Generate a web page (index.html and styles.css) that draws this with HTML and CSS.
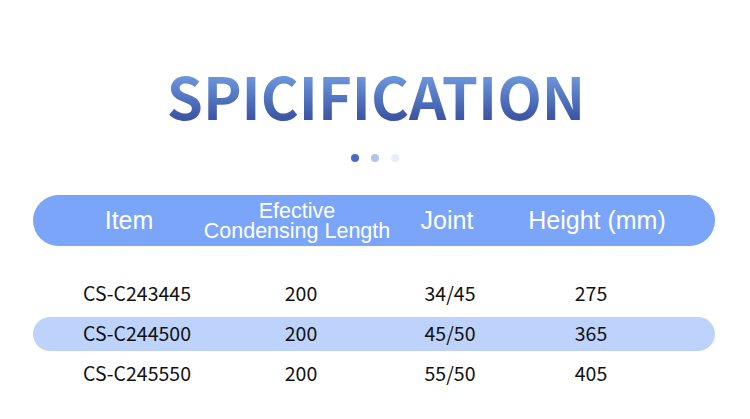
FILE: index.html
```html
<!DOCTYPE html>
<html>
<head>
<meta charset="utf-8">
<link rel="stylesheet" href="styles.css">
</head>
<body>
<div class="page">
  <h1 class="title">SPICIFICATION</h1>
  <div class="dots"><span class="dot d1"></span><span class="dot d2"></span><span class="dot d3"></span></div>
  <div class="table">
    <div class="head">
      <div class="hc c1">Item</div>
      <div class="hc c2"><span class="small">Efective<br>Condensing Length</span></div>
      <div class="hc c3">Joint</div>
      <div class="hc c4">Height (mm)</div>
    </div>
    <div class="row">
      <div class="c1">CS-C243445</div><div class="c2">200</div><div class="c3">34/45</div><div class="c4">275</div>
    </div>
    <div class="row alt">
      <div class="c1">CS-C244500</div><div class="c2">200</div><div class="c3">45/50</div><div class="c4">365</div>
    </div>
    <div class="row">
      <div class="c1">CS-C245550</div><div class="c2">200</div><div class="c3">55/50</div><div class="c4">405</div>
    </div>
  </div>
</div>
</body>
</html>
```
FILE: styles.css
```css
html, body { margin: 0; padding: 0; background: #fff; }
.page { width: 750px; height: 419px; overflow: hidden; padding-top: 66px; box-sizing: border-box; }
.title {
  margin: 0;
  font-family: "Noto Sans CJK SC", "Noto Sans", sans-serif;
  font-weight: 700;
  font-size: 58px;
  line-height: 1;
  letter-spacing: 0;
  text-align: center;
  padding-left: 2px;
  background: linear-gradient(to bottom, #6e99de 15%, #3c55a5 90%);
  -webkit-background-clip: text;
  background-clip: text;
  color: transparent;
}
.dots { display: flex; justify-content: center; gap: 12px; margin-top: 30px; }
.dot { width: 8px; height: 8px; border-radius: 50%; }
.d1 { background: #4a6cc4; }
.d2 { background: #b3c4e9; }
.d3 { background: #e9eef9; }
.table { margin: 33px 35px 0 33px; }
.head, .row {
  display: grid;
  grid-template-columns: 200px 130px 168px 132px 1fr;
  align-items: center;
  text-align: center;
}
.head {
  height: 51px;
  border-radius: 26px;
  background: #7aa5f9;
  color: #fff;
  font-family: "Liberation Sans", Arial, sans-serif;
  font-size: 25px;
  white-space: nowrap;
}
.head .hc { display: flex; justify-content: center; }
.head .small { flex: none; text-align: center; font-size: 21.5px; line-height: 20px; padding-top: 1px; }
.head .c1 { transform: translateX(-4px); }
.head .c2 { transform: translateX(-1px); }
.row {
  height: 34px;
  border-radius: 17px;
  margin-top: 6px;
  font-family: "Noto Sans CJK SC", "Noto Sans", sans-serif;
  font-size: 19.5px;
  line-height: 24px;
  color: #111;
  white-space: nowrap;
}
.row > div { padding-bottom: 2px; }
.head + .row { margin-top: 31px; }
.row.alt { background: #bdd3fb; }
.row .c1 { transform: translateX(4px); }
.row .c2 { transform: translateX(3px); }
.row .c3 { transform: translateX(3px); }
.row .c4 { transform: translateX(-6px); }
```
